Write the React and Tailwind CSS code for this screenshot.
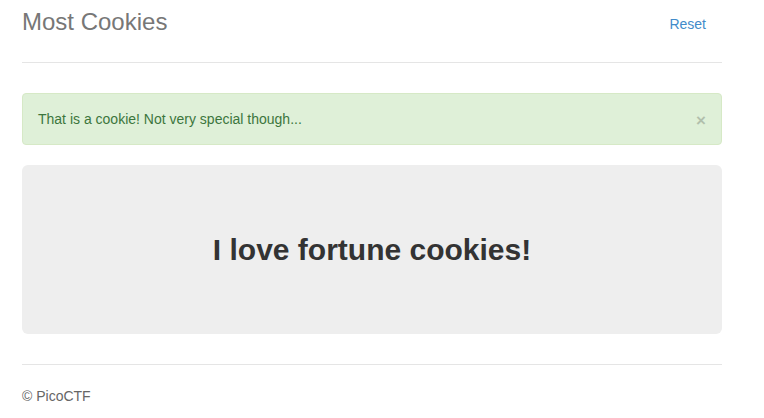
import React from 'react'

export default function App(){
  return (
    <div className="min-h-screen bg-white font-['Liberation_Sans',Arial,sans-serif] text-[14px] text-[#333]">
      <div className="ml-[22px] w-[700px] pt-[2px]">
        {/* header */}
        <div className="flex items-center justify-between border-b border-[#e5e5e5] pb-5">
          <h3 className="m-0 text-[24px] leading-[40px] text-[#777]">Most Cookies</h3>
          <a href="#" className="pl-[15px] pr-[16px] pt-[12px] pb-[8px] leading-5 text-[#428bca]">Reset</a>
        </div>

        {/* alert */}
        <div className="mt-[30px] flex items-center justify-between rounded border border-[#d6e9c6] bg-[#dff0d8] py-[15px] pl-[15px] pr-[15px] text-[#3c763d]">
          <span className="leading-5">That is a cookie! Not very special though...</span>
          <button className="h-5 text-[17px] font-bold leading-[24px] text-black opacity-20">×</button>
        </div>

        {/* jumbotron */}
        <div className="mt-5 flex h-[169px] items-center justify-center rounded-md bg-[#eee]">
          <h1 className="text-[30px] font-bold leading-[33px] text-[#333]">I love fortune cookies!</h1>
        </div>

        {/* footer */}
        <div className="mt-[30px] border-t border-[#e5e5e5] pt-[21px]">
          <span className="leading-5 text-[#666]">© PicoCTF</span>
        </div>
      </div>
    </div>
  )
}
